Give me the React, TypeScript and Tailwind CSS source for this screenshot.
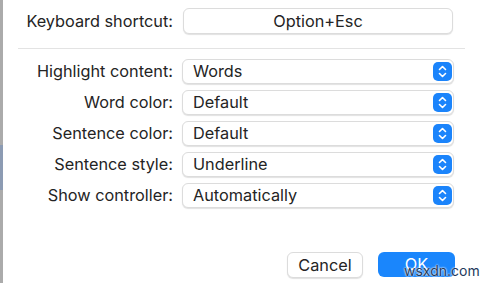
import React from 'react';

const rows = [
  { label: 'Highlight content:', value: 'Words' },
  { label: 'Word color:', value: 'Default' },
  { label: 'Sentence color:', value: 'Default' },
  { label: 'Sentence style:', value: 'Underline' },
  { label: 'Show controller:', value: 'Automatically' },
];

function Stepper() {
  return (
    <div className="w-[19px] h-[19px] rounded-[5px] bg-[#1b84fb] flex items-center justify-center">
      <svg width="9" height="13" viewBox="0 0 9 13" fill="none">
        <path d="M1.5 4.5L4.5 1.5L7.5 4.5" stroke="white" strokeWidth="1.6" strokeLinecap="round" strokeLinejoin="round" />
        <path d="M1.5 8.5L4.5 11.5L7.5 8.5" stroke="white" strokeWidth="1.6" strokeLinecap="round" strokeLinejoin="round" />
      </svg>
    </div>
  );
}

export default function App() {
  return (
    <div
      className="relative w-[480px] h-[283px] bg-white flex text-[#242424] overflow-hidden"
      style={{ fontFamily: 'Inter, "Liberation Sans", sans-serif' }}
    >
      {/* window edge on the left */}
      <div className="w-[3px] flex flex-col bg-[#ababab]">
        <div className="h-[145px]" />
        <div className="h-[45px] bg-[#8c9bb3]" />
      </div>

      <div className="flex-1 flex flex-col pt-[8px]">
        {/* keyboard shortcut */}
        <div className="flex items-center">
          <div className="w-[170px] text-right text-[16.3px]">Keyboard shortcut:</div>
          <div className="ml-[10px] w-[270px] h-[26px] rounded-[6px] border border-[#dcdcdc] bg-white shadow-[0_1px_1px_rgba(0,0,0,0.12)] flex items-center justify-center text-[16.3px]">
            Option+Esc
          </div>
        </div>

        <div className="mt-[14px] ml-[15px] w-[447px] h-px bg-[#e3e3e3]" />

        {/* popups */}
        <div className="mt-[10px] flex flex-col gap-[6px]">
          {rows.map((r) => (
            <div key={r.label} className="flex items-center">
              <div className="w-[170px] text-right text-[16.3px]">{r.label}</div>
              <div className="ml-[9px] w-[272px] h-[25px] rounded-[6px] border border-[#dcdcdc] bg-white shadow-[0_1px_1px_rgba(0,0,0,0.12)] flex items-center justify-between pl-[10px] pr-[1px] text-[16.3px]">
                <span>{r.value}</span>
                <Stepper />
              </div>
            </div>
          ))}
        </div>

        {/* buttons */}
        <div className="mt-auto mb-[5px] flex justify-end gap-[15px] pr-[25px]">
          <div className="w-[76px] h-[26px] rounded-[6px] border border-[#dcdcdc] bg-white shadow-[0_1px_1px_rgba(0,0,0,0.12)] flex items-center justify-center text-[16.3px]">
            Cancel
          </div>
          <div className="w-[77px] h-[25px] rounded-[6px] bg-[#1a86fc] text-white flex items-center justify-center text-[16.3px]">
            OK
          </div>
        </div>
      </div>

      {/* watermark */}
      <div
        className="absolute left-[404px] top-[263px] text-[14px] leading-[16px] text-[#233a5c]"
        style={{ textShadow: '0 0 2px #fff, 0 0 2px #fff' }}
      >
        wsxdn.com
      </div>
    </div>
  );
}
